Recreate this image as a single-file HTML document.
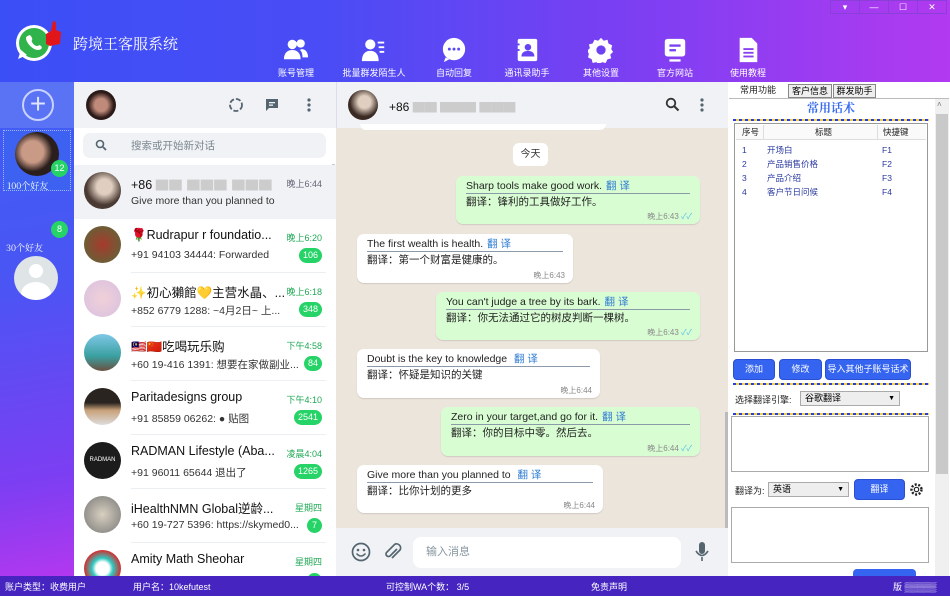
<!DOCTYPE html>
<html><head><meta charset="utf-8"><style>
*{box-sizing:border-box;margin:0;padding:0}
body{width:950px;height:596px;overflow:hidden;font-family:"Liberation Sans","Noto Sans CJK SC",sans-serif;position:relative;background:#fff}
.a{position:absolute}
.hdr{left:0;top:0;width:950px;height:82px;background:linear-gradient(90deg,#3b4ff6 0%,#4b4cf5 35%,#7a3ff2 65%,#b23af0 100%)}
.nav{color:#fff;font-size:9px;text-align:center;width:70px;line-height:11px}
.nav svg{display:block;margin:0 auto 5px}
.side{left:0;top:82px;width:74px;height:494px;background:linear-gradient(170deg,#3f5ef5 0%,#4a55f4 40%,#7d3ef2 80%,#b238ef 100%)}
.list{left:74px;top:82px;width:262px;height:494px;background:#fff}
.item{position:absolute;left:0;width:262px;height:54px}
.av{position:absolute;left:10px;top:7px;width:37px;height:37px;border-radius:50%}
.nm{position:absolute;left:57px;top:9px;font-size:12.5px;color:#111;white-space:nowrap}
.ms{position:absolute;left:57px;top:30px;font-size:10.5px;color:#333;white-space:nowrap}
.tm{position:absolute;right:14px;top:12px;font-size:9px;color:#1fa855}
.bd{position:absolute;right:14px;top:29px;height:15px;min-width:15px;padding:0 4px;border-radius:8px;background:#25d366;color:#fff;font-size:9px;line-height:15px;text-align:center}
.sep{position:absolute;left:57px;right:10px;bottom:0;height:1px;background:#eceff1}
.chat{left:336px;top:82px;width:392px;height:494px;background:#ece5dc}
.bub{position:absolute;border-radius:7px;padding:3px 10px;font-size:10.5px;line-height:14px;color:#222;box-shadow:0 1px 1px rgba(0,0,0,.12)}
.g{background:#d9fdd3}.w{background:#fff}
.bub .l1{border-bottom:1px solid #8a9aa8;white-space:nowrap}
.bub .l1 b{color:#2f7dd3;font-weight:normal;margin-left:4px}
.bub .l2{margin-top:1px;white-space:nowrap}
.bub .t{position:absolute;right:8px;bottom:2px;font-size:8px;line-height:10px;color:#888}
.rp{left:728px;top:82px;width:222px;height:494px;background:#fff}
.btn{position:absolute;background:#3464f0;color:#fff;font-size:9px;text-align:center;border-radius:4px;border:1px solid #2a4fd0}
.dash{position:absolute;left:733px;width:196px;height:2px;background:repeating-linear-gradient(90deg,#2a3ddb 0 3px,#f2d33a 3px 6px)}
.status{left:0;top:576px;width:950px;height:20px;background:#4524c0;color:#fff;font-size:9px}
</style></head><body>

<div class="a hdr"></div>
<svg class="a" style="left:12px;top:18px" width="50" height="46" viewBox="0 0 50 46">
<circle cx="22" cy="25" r="18" fill="#fff"/><circle cx="22" cy="25" r="15" fill="#2fb34a"/>
<path d="M6 41 L9 32 L15 37Z" fill="#fff"/>
<path d="M16 18c2-2 3 0 4 2s-1 2 0 4 3 4 5 4 2-2 4 0 0 4-3 4c-5 0-12-7-12-12 0-1 1-2 2-2z" fill="#fff"/>
<path d="M41 3 l3 1 0 8 5 2-1 12-10 2-4-2 0-10 5-3z" fill="#e0161b"/>
</svg>
<div class="a" style="left:73px;top:33px;color:#fff;font-size:15px;font-family:'Noto Serif CJK SC',serif">跨境王客服系统</div>

<div class="a nav" style="left:261px;top:37px"><svg width="26" height="26" viewBox="0 0 28 28"><circle cx="10" cy="8" r="5" fill="#fff"/><circle cx="19" cy="7" r="4.5" fill="#fff"/><path d="M1 24c0-7 4-10 9-10s9 3 9 10z" fill="#fff"/><path d="M20 13c4 0 7 3 7 9h-6c0-4-1-7-3-8z" fill="#fff"/></svg>账号管理</div>
<div class="a nav" style="left:339px;top:37px"><svg width="26" height="26" viewBox="0 0 28 28"><circle cx="10" cy="8" r="5.5" fill="#fff"/><path d="M1 26c0-8 4-11 9-11s9 3 9 11z" fill="#fff"/><rect x="18" y="5" width="7" height="2" fill="#fff"/><rect x="19" y="10" width="6" height="2" fill="#fff"/><rect x="20" y="15" width="5" height="2" fill="#fff"/></svg>批量群发陌生人</div>
<div class="a nav" style="left:419px;top:37px"><svg width="26" height="26" viewBox="0 0 28 28"><circle cx="14" cy="13" r="12" fill="#fff"/><path d="M5 22l-2 5 6-3z" fill="#fff"/><circle cx="9" cy="13" r="1.6" fill="#5a48f3"/><circle cx="14" cy="13" r="1.6" fill="#5a48f3"/><circle cx="19" cy="13" r="1.6" fill="#5a48f3"/></svg>自动回复</div>
<div class="a nav" style="left:492px;top:37px"><svg width="26" height="26" viewBox="0 0 28 28"><rect x="4" y="2" width="21" height="24" rx="2" fill="#fff"/><circle cx="15" cy="11" r="3.5" fill="#6644f3"/><path d="M8 21c0-4 3-6 7-6s7 2 7 6z" fill="#6644f3"/><rect x="2" y="7" width="4" height="2" fill="#6644f3"/><rect x="2" y="13" width="4" height="2" fill="#6644f3"/></svg>通讯录助手</div>
<div class="a nav" style="left:566px;top:37px"><svg width="26" height="26" viewBox="0 0 28 28"><path d="M14 1l3 3 4-1 1 4 4 2-1 4 2 3-3 3 1 4-4 1-2 4-4-1-3 3-3-3-4 1-1-4-4-2 1-4-2-3 3-3-1-4 4-1 2-4 4 1z" fill="#fff"/><circle cx="14" cy="14" r="5" fill="#6e42f3"/></svg>其他设置</div>
<div class="a nav" style="left:640px;top:37px"><svg width="26" height="26" viewBox="0 0 28 28"><rect x="3" y="2" width="22" height="19" rx="3" fill="#fff"/><rect x="8" y="8" width="12" height="2.5" fill="#7a40f2"/><rect x="8" y="13" width="7" height="2.5" fill="#7a40f2"/><rect x="8" y="24" width="12" height="2.5" fill="#fff"/></svg>官方网站</div>
<div class="a nav" style="left:713px;top:37px"><svg width="26" height="26" viewBox="0 0 28 28"><path d="M5 1h13l6 6v20H5z" fill="#fff"/><rect x="9" y="12" width="11" height="2" fill="#8a3ff1"/><rect x="9" y="16" width="11" height="2" fill="#8a3ff1"/><rect x="9" y="20" width="11" height="2" fill="#8a3ff1"/></svg>使用教程</div>

<div class="a" style="left:830px;top:0px;width:117px;height:14px;border:1px solid #8a3fd8;display:flex;color:#fff;font-size:9px;line-height:12px">
<div style="flex:1;text-align:center;border-right:1px solid #8a3fd8">▾</div><div style="flex:1;text-align:center;border-right:1px solid #8a3fd8">—</div><div style="flex:1;text-align:center;border-right:1px solid #8a3fd8">☐</div><div style="flex:1;text-align:center">✕</div></div>

<div class="a side"></div>
<div class="a" style="left:0;top:82px;width:74px;height:46px;background:#5a73f4"></div>
<div class="a" style="left:22px;top:89px;width:32px;height:32px;border:2px solid #c9d3ff;border-radius:50%;color:#dfe5ff;font-size:28px;line-height:26px;text-align:center">+</div>
<div class="a" style="left:3px;top:130px;width:68px;height:61px;border:1px dotted #9fb6ff;background:#3d62f2"></div>
<div class="a" style="left:15px;top:132px;width:44px;height:44px;border-radius:50%;background:radial-gradient(circle at 40% 45%,#c99a86 0 30%,#2a1f1c 55%)"></div>
<div class="a" style="left:51px;top:160px;width:17px;height:17px;border-radius:50%;background:#25d366;color:#fff;font-size:9px;line-height:17px;text-align:center">12</div>
<div class="a" style="left:7px;top:179px;color:#fff;font-size:9px;font-family:'Noto Serif CJK SC',serif">100个好友</div>
<div class="a" style="left:51px;top:221px;width:17px;height:17px;border-radius:50%;background:#25d366;color:#fff;font-size:9px;line-height:17px;text-align:center">8</div>
<div class="a" style="left:6px;top:241px;color:#fff;font-size:9px;font-family:'Noto Serif CJK SC',serif">30个好友</div>
<div class="a" style="left:14px;top:256px;width:44px;height:44px;border-radius:50%;background:#dfe4e7;overflow:hidden"><div style="position:absolute;left:15px;top:8px;width:14px;height:14px;border-radius:50%;background:#fff"></div><div style="position:absolute;left:7px;top:26px;width:30px;height:24px;border-radius:50%;background:#fff"></div></div>

<div class="a list">
<div class="a" style="left:0;top:0;width:262px;height:46px;background:#f0f2f5"></div>
<div class="a" style="left:12px;top:8px;width:30px;height:30px;border-radius:50%;background:radial-gradient(circle,#c08a7a 0 30%,#2b1a18 60%)"></div>
<svg class="a" style="left:154px;top:15px" width="16" height="16"><circle cx="8" cy="8" r="6" fill="none" stroke="#54656f" stroke-width="1.8" stroke-dasharray="5 2"/></svg>
<svg class="a" style="left:190px;top:15px" width="16" height="16"><path d="M2 2h12v9H5l-3 3z" fill="#54656f"/><rect x="5" y="5" width="6" height="1.3" fill="#f0f2f5"/><rect x="5" y="7.5" width="4" height="1.3" fill="#f0f2f5"/></svg>
<svg class="a" style="left:231px;top:15px" width="8" height="16"><circle cx="4" cy="3" r="1.6" fill="#54656f"/><circle cx="4" cy="8" r="1.6" fill="#54656f"/><circle cx="4" cy="13" r="1.6" fill="#54656f"/></svg>
<div class="a" style="left:9px;top:51px;width:243px;height:25px;background:#f0f2f5;border-radius:7px"></div>
<svg class="a" style="left:21px;top:57px" width="12" height="12"><circle cx="5" cy="5" r="3.5" fill="none" stroke="#54656f" stroke-width="1.6"/><path d="M8 8l3 3" stroke="#54656f" stroke-width="1.8"/></svg>
<div class="a" style="left:57px;top:56px;font-size:10.5px;color:#7b8790">搜索或开始新对话</div>
<div class="a" style="left:258px;top:82px;width:3px;height:18px;background:#c8c8c8"></div>

<div class="item" style="top:83px;background:#f0f2f5"><div class="av" style="background:radial-gradient(circle at 55% 40%,#e0cfc0 0 25%,#4a3a33 60%)"></div><div class="nm">+86 <span style="color:#ccc;letter-spacing:1px">▇▇ ▇▇▇ ▇▇▇</span></div><div class="ms">Give more than you planned to</div><div class="tm" style="color:#667">晚上6:44</div></div>
<div class="item" style="top:137px"><div class="av" style="background:radial-gradient(circle,#a73a2c,#556b3a)"></div><div class="nm">🌹Rudrapur r foundatio...</div><div class="ms">+91 94103 34444: Forwarded</div><div class="tm">晚上6:20</div><div class="bd">106</div><div class="sep"></div></div>
<div class="item" style="top:191px"><div class="av" style="background:radial-gradient(circle,#f0d0d8,#d8c0e0)"></div><div class="nm">✨初心獺館💛主营水晶、...</div><div class="ms">+852 6779 1288: ~4月2日~ 上...</div><div class="tm">晚上6:18</div><div class="bd">348</div><div class="sep"></div></div>
<div class="item" style="top:245px"><div class="av" style="background:linear-gradient(#7fc8e8,#3aa0a0 60%,#6a5040)"></div><div class="nm">🇲🇾🇨🇳吃喝玩乐购</div><div class="ms">+60 19-416 1391: 想要在家做副业...</div><div class="tm">下午4:58</div><div class="bd">84</div><div class="sep"></div></div>
<div class="item" style="top:299px"><div class="av" style="background:linear-gradient(#2a2420 40%,#c8a078 60%,#ddd)"></div><div class="nm">Paritadesigns group</div><div class="ms">+91 85859 06262: ● 贴图</div><div class="tm">下午4:10</div><div class="bd">2541</div><div class="sep"></div></div>
<div class="item" style="top:353px"><div class="av" style="background:#1c1c1c;color:#fff;font-size:6px;line-height:37px;text-align:center">RADMAN</div><div class="nm">RADMAN Lifestyle (Aba...</div><div class="ms">+91 96011 65644 退出了</div><div class="tm">凌晨4:04</div><div class="bd">1265</div><div class="sep"></div></div>
<div class="item" style="top:407px"><div class="av" style="background:radial-gradient(circle,#d8d0c0,#777)"></div><div class="nm">iHealthNMN Global逆龄...</div><div class="ms">+60 19-727 5396: https://skymed0...</div><div class="tm">星期四</div><div class="bd">7</div><div class="sep"></div></div>
<div class="item" style="top:461px"><div class="av" style="background:radial-gradient(circle,#fff 0 25%,#30c8c0 40%,#d03030 70%)"></div><div class="nm">Amity Math Sheohar</div><div class="tm">星期四</div><div class="bd" style="top:30px">&nbsp;</div></div>
</div>

<div class="a chat">
<div class="a" style="left:0;top:0;width:392px;height:46px;background:#f0f2f5;border-left:1px solid #dde"></div>
<div class="a" style="left:12px;top:8px;width:30px;height:30px;border-radius:50%;background:radial-gradient(circle at 55% 40%,#e0cfc0 0 25%,#3a2a23 60%)"></div>
<div class="a" style="left:53px;top:16px;font-size:12px;color:#111">+86 <span style="color:#ccc">▇▇ ▇▇▇ ▇▇▇</span></div>
<svg class="a" style="left:329px;top:15px" width="15" height="15"><circle cx="6" cy="6" r="4.3" fill="none" stroke="#333" stroke-width="1.8"/><path d="M9 9l4.5 4.5" stroke="#333" stroke-width="2"/></svg>
<svg class="a" style="left:362px;top:15px" width="8" height="16"><circle cx="4" cy="3" r="1.6" fill="#54656f"/><circle cx="4" cy="8" r="1.6" fill="#54656f"/><circle cx="4" cy="13" r="1.6" fill="#54656f"/></svg>
<div class="a" style="left:24px;top:42px;width:246px;height:6px;background:#fff;border-radius:0 0 6px 6px"></div>
<div class="a" style="left:177px;top:61px;width:35px;height:23px;background:#fff;border-radius:6px;font-size:10px;text-align:center;line-height:23px;color:#333">今天</div>
<div class="bub g" style="left:120px;top:94px;width:244px;height:48px"><div class="l1">Sharp tools make good work.<b>翻 译</b></div><div class="l2">翻译：锋利的工具做好工作。</div><div class="t">晚上6:43 <span style="color:#53bdeb">✓✓</span></div></div>
<div class="bub w" style="left:21px;top:152px;width:216px;height:49px"><div class="l1">The first wealth is health.<b>翻 译</b></div><div class="l2">翻译：第一个财富是健康的。</div><div class="t">晚上6:43</div></div>
<div class="bub g" style="left:100px;top:210px;width:264px;height:48px"><div class="l1">You can't judge a tree by its bark.<b>翻 译</b></div><div class="l2">翻译：你无法通过它的树皮判断一棵树。</div><div class="t">晚上6:43 <span style="color:#53bdeb">✓✓</span></div></div>
<div class="bub w" style="left:21px;top:267px;width:243px;height:49px"><div class="l1">Doubt is the key to knowledge <b>翻 译</b></div><div class="l2">翻译：怀疑是知识的关键</div><div class="t">晚上6:44</div></div>
<div class="bub g" style="left:105px;top:325px;width:259px;height:49px"><div class="l1">Zero in your target,and go for it.<b>翻 译</b></div><div class="l2">翻译：你的目标中零。然后去。</div><div class="t">晚上6:44 <span style="color:#53bdeb">✓✓</span></div></div>
<div class="bub w" style="left:21px;top:383px;width:246px;height:48px"><div class="l1">Give more than you planned to <b>翻 译</b></div><div class="l2">翻译：比你计划的更多</div><div class="t">晚上6:44</div></div>
<div class="a" style="left:389px;top:330px;width:3px;height:116px;background:#bbb"></div>
<div class="a" style="left:0;top:446px;width:392px;height:48px;background:#f0f2f5"></div>
<svg class="a" style="left:15px;top:460px" width="20" height="20"><circle cx="10" cy="10" r="8.5" fill="none" stroke="#54656f" stroke-width="1.7"/><circle cx="7" cy="8" r="1.3" fill="#54656f"/><circle cx="13" cy="8" r="1.3" fill="#54656f"/><path d="M5.5 11.5q4.5 5 9 0" fill="none" stroke="#54656f" stroke-width="1.6"/></svg>
<svg class="a" style="left:46px;top:460px" width="20" height="20"><path d="M15 7l-7 7a2.5 2.5 0 0 1-3.5-3.5l8-8a4 4 0 0 1 5.5 5.5l-8 8" fill="none" stroke="#54656f" stroke-width="1.7"/></svg>
<div class="a" style="left:77px;top:455px;width:268px;height:31px;background:#fff;border-radius:8px;font-size:11px;color:#8696a0;line-height:31px;padding-left:13px">输入消息</div>
<svg class="a" style="left:358px;top:459px" width="16" height="22"><rect x="5" y="1" width="6" height="12" rx="3" fill="#54656f"/><path d="M2 10q6 9 12 0M8 16v4" fill="none" stroke="#54656f" stroke-width="1.6"/></svg>
</div>

<div class="a rp"></div>
<div class="a" style="left:729px;top:83px;width:58px;height:16px;font-size:9px;color:#222;text-align:center;line-height:14px">常用功能</div>
<div class="a" style="left:788px;top:84px;width:44px;height:14px;border:1px solid #888;background:#eee;font-size:9px;text-align:center;line-height:12px">客户信息</div>
<div class="a" style="left:833px;top:84px;width:43px;height:14px;border:1px solid #888;background:#eee;font-size:9px;text-align:center;line-height:12px">群发助手</div>
<div class="a" style="left:729px;top:98px;width:220px;height:1px;background:#bbb"></div>
<div class="a" style="left:733px;top:99px;width:196px;text-align:center;font-size:12px;color:#3a6cf0;font-weight:bold;font-family:'Noto Serif CJK SC',serif">常用话术</div>
<div class="dash" style="top:119px"></div>
<div class="a" style="left:734px;top:123px;width:194px;height:229px;border:1px solid #999;background:#fff;font-size:8.5px;color:#2a3aa0">
<div style="position:absolute;left:1px;top:1px;width:190px;height:15px;background:#fafafa;border-bottom:1px solid #ddd;color:#222"><span style="position:absolute;left:6px;top:1px">序号</span><span style="position:absolute;left:79px;top:1px">标题</span><span style="position:absolute;left:147px;top:1px">快捷键</span><span style="position:absolute;left:27px;top:0;width:1px;height:15px;background:#ddd"></span><span style="position:absolute;left:141px;top:0;width:1px;height:15px;background:#ddd"></span></div>
<div style="position:absolute;left:7px;top:19px;line-height:14px">1<br>2<br>3<br>4</div>
<div style="position:absolute;left:32px;top:19px;line-height:14px">开场白<br>产品销售价格<br>产品介绍<br>客户节日问候</div>
<div style="position:absolute;left:147px;top:19px;line-height:14px">F1<br>F2<br>F3<br>F4</div>
</div>
<div class="btn" style="left:733px;top:359px;width:42px;height:21px;line-height:19px">添加</div>
<div class="btn" style="left:779px;top:359px;width:43px;height:21px;line-height:19px">修改</div>
<div class="btn" style="left:825px;top:359px;width:86px;height:21px;line-height:19px">导入其他子账号话术</div>
<div class="dash" style="top:383px"></div>
<div class="a" style="left:735px;top:393px;font-size:9px;color:#222">选择翻译引擎:</div>
<div class="a" style="left:800px;top:391px;width:100px;height:15px;border:1px solid #aaa;background:#eee;font-size:9px;line-height:13px;padding-left:4px">谷歌翻译<span style="float:right;margin-right:4px;font-size:7px">▼</span></div>
<div class="dash" style="top:413px"></div>
<div class="a" style="left:731px;top:416px;width:198px;height:56px;border:1px solid #aaa"></div>
<div class="a" style="left:735px;top:484px;font-size:9px;color:#222">翻译为:</div>
<div class="a" style="left:768px;top:482px;width:81px;height:15px;border:1px solid #aaa;background:#eee;font-size:9px;line-height:13px;padding-left:4px">英语<span style="float:right;margin-right:4px;font-size:7px">▼</span></div>
<div class="btn" style="left:854px;top:479px;width:51px;height:21px;line-height:19px">翻译</div>
<svg class="a" style="left:909px;top:482px" width="15" height="15"><circle cx="7.5" cy="7.5" r="5" fill="none" stroke="#222" stroke-width="2.4" stroke-dasharray="2 1.6"/><circle cx="7.5" cy="7.5" r="2.2" fill="none" stroke="#222" stroke-width="1.2"/></svg>
<div class="a" style="left:731px;top:507px;width:198px;height:56px;border:1px solid #aaa"></div>
<div class="a" style="left:853px;top:569px;width:63px;height:8px;background:#3464f0;border-radius:4px 4px 0 0"></div>
<div class="a" style="left:935px;top:99px;width:14px;height:477px;background:#f0f0f0"></div>
<div class="a" style="left:936px;top:114px;width:12px;height:360px;background:#c9c9c9"></div>
<div class="a" style="left:937px;top:100px;font-size:8px;color:#777">˄</div>

<div class="a status">
<span class="a" style="left:5px;top:4px">账户类型：收费用户</span>
<span class="a" style="left:133px;top:4px">用户名：10kefutest</span>
<span class="a" style="left:386px;top:4px">可控制WA个数： 3/5</span>
<span class="a" style="left:591px;top:4px">免责声明</span>
<span class="a" style="left:893px;top:4px">版 ▒▒▒▒▒</span>
</div>
</body></html>
